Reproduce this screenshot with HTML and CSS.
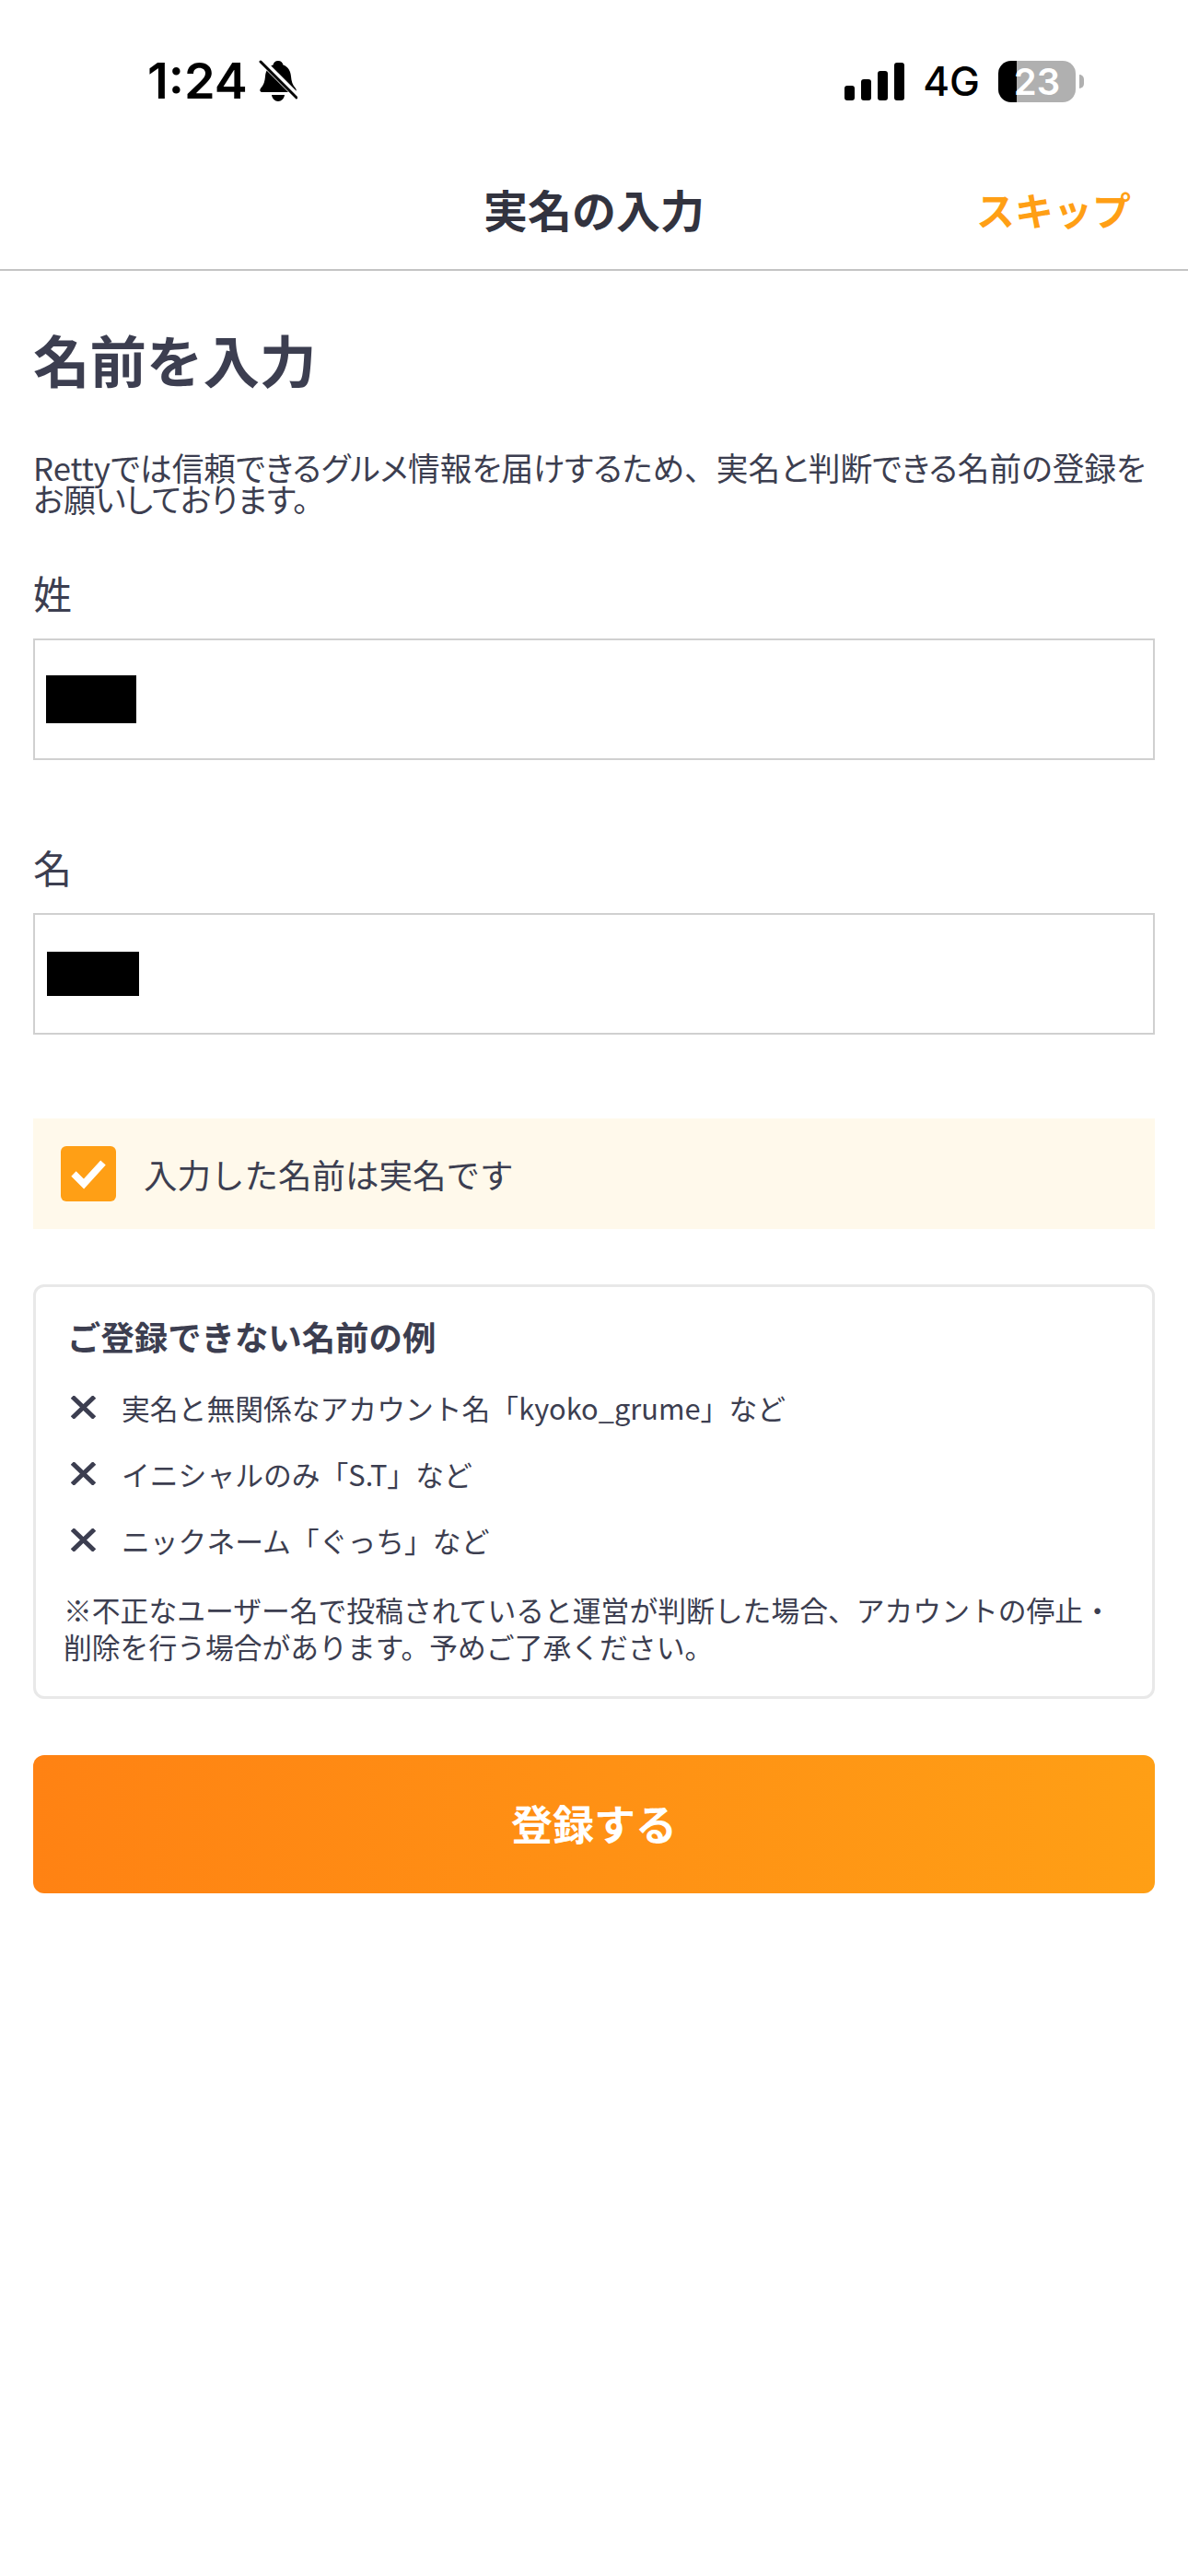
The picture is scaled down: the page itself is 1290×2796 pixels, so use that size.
FILE: index.html

```html
<!DOCTYPE html>
<html lang="ja">
<head>
  <meta name="viewport" content="width=device-width, initial-scale=1.0">
  <meta charset="UTF-8" />
  <title>実名の入力</title>
  <link rel="stylesheet" href="styles.css">
</head>
<body>
  <div class="status-bar">
    <div class="status-left">
      <span class="time">1:24</span>
      <svg class="bell" viewBox="0 0 42 46" width="42" height="46">
        <path d="M21 1c3 0 5 2 5.500 4.500C32 7.500 34.500 12 35 18c.4 5 1.500 9 5 13 1.500 2 .5 4-2 4H4c-2.500 0-3.500-2-2-4 3.500-4 4.600-8 5-13 .5-6 3-10.500 8.500-12.500C16 3 18 1 21 1z" fill="#000"/>
        <path d="M14 38h14c-.5 4-3.500 7-7 7s-6.500-3-7-7z" fill="#000"/>
        <path d="M1 -1L43 41" stroke="#fff" stroke-width="7"/>
        <path d="M2 2L41 41" stroke="#000" stroke-width="3" stroke-linecap="round"/>
      </svg>
    </div>
    <div class="status-right">
      <div class="signal">
        <span class="bar bar-1"></span>
        <span class="bar bar-2"></span>
        <span class="bar bar-3"></span>
        <span class="bar bar-4"></span>
      </div>
      <span class="network">4G</span>
      <div class="battery">23</div>
      <span class="battery-cap"></span>
    </div>
  </div>

  <header class="nav">
    <span></span>
    <h1 class="nav-title">実名の入力</h1>
    <a class="nav-skip">スキップ</a>
  </header>

  <main class="content">
    <h2 class="page-title">名前を入力</h2>
    <p class="lead">Rettyでは信頼できるグルメ情報を届けするため<span class="full-comma">、</span>実名と判断できる名前の登録を<br>お願いしております。</p>

    <div class="field">
      <label class="field-label">姓</label>
      <div class="field-input"><span class="redact"></span></div>
    </div>

    <div class="field field-second">
      <label class="field-label">名</label>
      <div class="field-input"><span class="redact redact-wide"></span></div>
    </div>

    <div class="confirm">
      <span class="checkbox">
        <svg viewBox="0 0 40 34" width="40" height="34">
          <path d="M4 17L15 28L36 5" fill="none" stroke="#fff" stroke-width="7.500"/>
        </svg>
      </span>
      <span class="confirm-text">入力した名前は実名です</span>
    </div>

    <section class="examples">
      <h3 class="examples-title">ご登録できない名前の例</h3>
      <ul class="examples-list">
        <li>
          <svg class="cross" viewBox="0 0 27 25" width="27" height="25"><path d="M1.500 1L25.500 24M25.500 1L1.500 24" stroke="#3c3e50" stroke-width="5" fill="none"/></svg>
          <span>実名と無関係なアカウント名「kyoko_grume」など</span>
        </li>
        <li>
          <svg class="cross" viewBox="0 0 27 25" width="27" height="25"><path d="M1.500 1L25.500 24M25.500 1L1.500 24" stroke="#3c3e50" stroke-width="5" fill="none"/></svg>
          <span>イニシャルのみ「S.T」など</span>
        </li>
        <li>
          <svg class="cross" viewBox="0 0 27 25" width="27" height="25"><path d="M1.500 1L25.500 24M25.500 1L1.500 24" stroke="#3c3e50" stroke-width="5" fill="none"/></svg>
          <span>ニックネーム「ぐっち」など</span>
        </li>
      </ul>
      <p class="examples-note">※不正なユーザー名で投稿されていると運営が判断した場合、アカウントの停止・削除を行う場合があります。予めご了承ください。</p>
    </section>

    <button class="submit" type="button">登録する</button>
  </main>
</body>
</html>
```

FILE: styles.css

```css
body {
  margin: 0;
  width: 1290px;
  height: 2796px;
  background: #fff;
  color: #3c3e50;
  font-family: "Noto Sans CJK JP", "Noto Sans", sans-serif;
  overflow: hidden;
}

/* ステータスバー */
.status-bar {
  display: flex;
  justify-content: space-between;
  align-items: center;
  height: 160px;
  padding: 16px 113px 0 160px;
  box-sizing: border-box;
  color: #000;
  font-family: Inter, sans-serif;
}
.status-left {
  display: flex;
  align-items: center;
  gap: 12px;
}
.time {
  font-size: 54px;
  font-weight: 600;
  line-height: 60px;
}
.status-right {
  display: flex;
  align-items: center;
}
.signal {
  display: flex;
  align-items: flex-end;
  gap: 7px;
  height: 41px;
  margin-right: 20px;
}
.bar {
  width: 11px;
  background: #000;
  border-radius: 3px;
}
.bar-1 { height: 16px; }
.bar-2 { height: 23px; }
.bar-3 { height: 32px; }
.bar-4 { height: 41px; }
.network {
  font-size: 44px;
  font-weight: 500;
  line-height: 46px;
  margin-right: 20px;
}
.battery {
  width: 84px;
  height: 45px;
  border-radius: 14px;
  background: linear-gradient(to right, #000 24%, #b0b0b0 24%);
  color: #fff;
  font-size: 40px;
  font-weight: 600;
  line-height: 45px;
  text-align: center;
}
.battery-cap {
  width: 5px;
  height: 15px;
  margin-left: 4px;
  background: #b0b0b0;
  border-radius: 0 8px 8px 0;
}

/* ナビ */
.nav {
  display: grid;
  grid-template-columns: 1fr auto 1fr;
  align-items: center;
  height: 134px;
  padding: 0 62px;
  box-sizing: border-box;
  border-bottom: 2px solid #c4c4c4;
}
.nav-title {
  margin: 0;
  font-size: 48px;
  font-weight: 700;
  color: #32333f;
}
.nav-skip {
  justify-self: end;
  font-size: 42px;
  font-weight: 700;
  color: #ff9f15;
}

/* 本文 */
.content {
  display: flex;
  flex-direction: column;
  padding: 0 36px;
}
.page-title {
  margin: 52px 0 0;
  font-size: 61.500px;
  font-weight: 700;
  line-height: 88px;
}
.lead {
  margin: 56px 0 0;
  font-size: 34.700px;
  font-feature-settings: "palt";
  line-height: 34px;
  white-space: nowrap;
}
.full-comma {
  font-feature-settings: normal;
}
.field {
  margin-top: 55px;
}
.field-second {
  margin-top: 86px;
}
.field-label {
  display: block;
  font-size: 42px;
  line-height: 60px;
  margin-bottom: 20px;
}
.field-input {
  display: flex;
  align-items: center;
  height: 132px;
  padding-left: 12px;
  box-sizing: border-box;
  border: 2px solid #d0d0d0;
}
.redact {
  width: 98px;
  height: 52px;
  background: #000;
}
.redact-wide {
  width: 100px;
  height: 48px;
  margin-left: 1px;
}
.confirm {
  display: flex;
  align-items: center;
  gap: 30px;
  height: 120px;
  margin-top: 91px;
  padding-left: 30px;
  background: #fff9eb;
}
.checkbox {
  display: flex;
  justify-content: center;
  align-items: center;
  width: 60px;
  height: 60px;
  border-radius: 6px;
  background: #ff9f15;
}
.confirm-text {
  font-size: 36.500px;
}
.examples {
  margin-top: 60px;
  padding: 25px 33px 34px 34px;
  border: 3px solid #e8e8e8;
  border-radius: 12px;
}
.examples-title {
  margin: 0;
  font-size: 36.400px;
  font-weight: 700;
  line-height: 56px;
}
.examples-list {
  margin: 13px 0 0;
  padding: 0;
  list-style: none;
}
.examples-list li {
  display: flex;
  align-items: center;
  gap: 28px;
  height: 72px;
  padding-left: 4px;
  font-size: 30.800px;
}
.examples-note {
  margin: 20px 0 0 -4px;
  font-size: 30.800px;
  line-height: 40px;
}
.submit {
  height: 150px;
  margin-top: 61px;
  padding-bottom: 4px;
  border: none;
  border-radius: 12px;
  background: linear-gradient(to right, #ff8213, #ff9f15);
  color: #fff;
  font-family: inherit;
  font-size: 45px;
  font-weight: 700;
}
```
